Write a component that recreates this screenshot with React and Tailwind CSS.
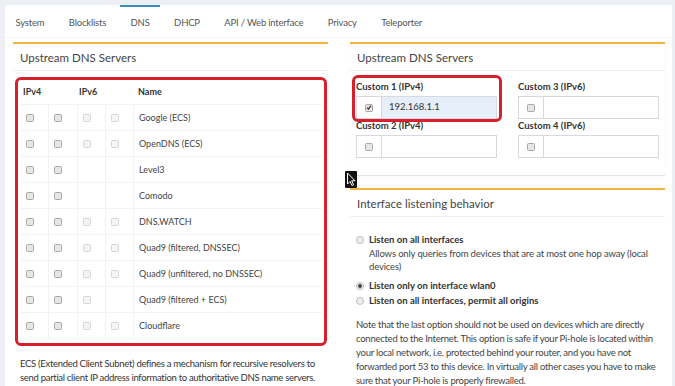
import React from "react";

const tabs = ["System", "Blocklists", "DNS", "DHCP", "API / Web interface", "Privacy", "Teleporter"];

const servers = [
  { name: "Google (ECS)", v6: 2 },
  { name: "OpenDNS (ECS)", v6: 2 },
  { name: "Level3", v6: 0 },
  { name: "Comodo", v6: 0 },
  { name: "DNS.WATCH", v6: 2 },
  { name: "Quad9 (filtered, DNSSEC)", v6: 2 },
  { name: "Quad9 (unfiltered, no DNSSEC)", v6: 2 },
  { name: "Quad9 (filtered + ECS)", v6: 1 },
  { name: "Cloudflare", v6: 2 },
];

function Check({ light, checked }) {
  return (
    <span
      className={
        "inline-flex items-center justify-center w-[8px] h-[8px] rounded-[1.5px] border " +
        (light ? "border-[#d6d6d6] bg-[#f4f4f4]" : "border-[#a8a8a8] bg-[#e6e6e6]")
      }
    >
      {checked && (
        <svg width="7" height="7" viewBox="0 0 8 8">
          <path d="M1.3 4.2 L3.2 6 L6.8 1.6" fill="none" stroke="#333" strokeWidth="1.6" />
        </svg>
      )}
    </span>
  );
}

function Radio({ checked }) {
  return (
    <span className="inline-flex items-center justify-center w-[8px] h-[8px] rounded-full border border-[#bdbdbd] bg-[#eeeeee] shrink-0">
      {checked && <span className="w-[4px] h-[4px] rounded-full bg-[#444]" />}
    </span>
  );
}

function BoxHeader({ title }) {
  return (
    <div className="h-[27px] flex items-center pl-[7px] pt-[1px] border-b border-[#efefef] text-[11.5px] text-[#444]">
      {title}
    </div>
  );
}

function CustomInput({ label, checked, value, filled }) {
  return (
    <div>
      <div className="h-[14px] leading-[14px] text-[9.5px] font-bold text-[#333]">{label}</div>
      <div className="mt-[2px] flex h-[23px] border border-[#d6d9df]">
        <div className="w-[25px] flex items-center justify-center border-r border-[#d6d9df] bg-white">
          <Check checked={checked} />
        </div>
        <div className={"flex-1 flex items-center pl-[7px] text-[9.5px] text-[#333] " + (filled ? "bg-[#e6eefa]" : "bg-white")}>
          {value}
        </div>
      </div>
    </div>
  );
}

export default function App() {
  return (
    <div
      className="w-[675px] h-[386px] overflow-hidden bg-[#ecf0f5] pl-[5px] pt-[5px] relative"
      style={{ fontFamily: "Lato, 'Liberation Sans', sans-serif" }}
    >
      <div className="w-[667px] h-[381px] bg-white">
        <div className="flex h-[33px] border-b border-[#f4f4f4]">
          {tabs.map((t) => (
            <div
              key={t}
              className={
                "px-[10.5px] mr-[3.5px] pt-[3px] flex items-center border-t-2 text-[9.5px] tracking-[-0.2px] text-[#555] " +
                (t === "DNS" ? "border-[#3c8dbc]" : "border-transparent")
              }
            >
              {t}
            </div>
          ))}
        </div>

        <div className="flex gap-[22px] pl-[8px] pr-[7px] pt-[4px]">
          {/* left column */}
          <div className="w-[315px]">
            <div className="border-t-2 border-[#f0b43c]">
              <BoxHeader title="Upstream DNS Servers" />
              <div className="pl-[2px] pr-[1px] pt-[6px]">
                <div className="border-[3px] border-[#d6202c] rounded-[6px] px-[2px] pb-[5px]">
                  <div className="grid grid-cols-[28px_29px_28px_28px_1fr] text-[9px] text-[#444]">
                    <div className="col-span-2 h-[24px] flex items-center pl-[3px] font-bold text-[#333]">IPv4</div>
                    <div className="col-span-2 h-[24px] flex items-center pl-[2px] font-bold text-[#333]">IPv6</div>
                    <div className="h-[24px] flex items-center pl-[5px] font-bold text-[#333]">Name</div>
                    {servers.map((s) => (
                      <React.Fragment key={s.name}>
                        <div className="h-[26px] flex items-center pl-[6px] border-t border-[#f2f2f2]">
                          <Check />
                        </div>
                        <div className="h-[26px] flex items-center pl-[5px] border-t border-l border-[#f2f2f2]">
                          <Check />
                        </div>
                        <div className="h-[26px] flex items-center pl-[5px] border-t border-l border-[#f2f2f2]">
                          {s.v6 >= 1 && <Check light />}
                        </div>
                        <div className="h-[26px] flex items-center pl-[5px] border-t border-l border-[#f2f2f2]">
                          {s.v6 >= 2 && <Check light />}
                        </div>
                        <div className="h-[26px] flex items-center pl-[5px] border-t border-l border-[#f2f2f2]">
                          {s.name}
                        </div>
                      </React.Fragment>
                    ))}
                  </div>
                </div>
              </div>
              <p className="mt-[11px] px-[7px] text-[9.5px] tracking-[-0.3px] leading-[14px] text-[#333]">
                ECS (Extended Client Subnet) defines a mechanism for recursive resolvers to send partial client IP
                address information to authoritative DNS name servers. Content Delivery Networks (CDNs) and
                latency-sensitive services use this to give geo-located responses.
              </p>
            </div>
          </div>

          {/* right column */}
          <div className="w-[315px]">
            <div className="border-t-2 border-[#f0b43c] shadow-[0_1px_1px_rgba(0,0,0,0.1)]">
              <BoxHeader title="Upstream DNS Servers" />
              <div className="px-[6px] pt-[9px] pb-[17px] grid grid-cols-2 gap-x-[21px]">
                <div className="relative">
                  <div className="absolute -left-[4px] -top-[5px] w-[150px] h-[47px] border-[3px] border-[#d6202c] rounded-[6px]" />
                  <CustomInput label="Custom 1 (IPv4)" checked value="192.168.1.1" filled />
                </div>
                <CustomInput label="Custom 3 (IPv6)" />
                <CustomInput label="Custom 2 (IPv4)" />
                <CustomInput label="Custom 4 (IPv6)" />
              </div>
            </div>

            <div className="mt-[13px] border-t-2 border-[#f0b43c]">
              <BoxHeader title="Interface listening behavior" />
              <div className="px-[6px] pt-[16px] text-[9.5px] text-[#333]">
                <div className="flex gap-[5px]">
                  <div className="h-[14px] flex items-center">
                    <Radio />
                  </div>
                  <div>
                    <div className="leading-[14px] font-bold">Listen on all interfaces</div>
                    <div className="leading-[13px] tracking-[-0.15px] text-[#444]">
                      Allows only queries from devices that are at most one hop away (local devices)
                    </div>
                  </div>
                </div>
                <div className="mt-[6px] flex gap-[5px] items-center leading-[14px] font-bold">
                  <Radio checked />
                  Listen only on interface wlan0
                </div>
                <div className="mt-[1px] flex gap-[5px] items-center leading-[14px] font-bold">
                  <Radio />
                  Listen on all interfaces, permit all origins
                </div>
                <p className="mt-[10px] leading-[14px] tracking-[-0.25px] text-[#444]">
                  Note that the last option should not be used on devices which are directly connected to the
                  Internet. This option is safe if your Pi-hole is located within your local network, i.e. protected
                  behind your router, and you have not forwarded port 53 to this device. In virtually all other cases
                  you have to make sure that your Pi-hole is properly firewalled.
                </p>
              </div>
            </div>
          </div>
        </div>
      </div>

      {/* mouse cursor */}
      <svg className="absolute left-[345px] top-[171px]" width="12" height="17" viewBox="0 0 12 17">
        <rect x="0" y="0" width="12" height="17" rx="1" fill="#111" />
        <path d="M2.5 2 L2.5 13 L5 10.5 L7 14.5 L8.6 13.7 L6.7 9.8 L10 9.8 Z" fill="#111" stroke="#fff" strokeWidth="1" />
      </svg>
    </div>
  );
}
